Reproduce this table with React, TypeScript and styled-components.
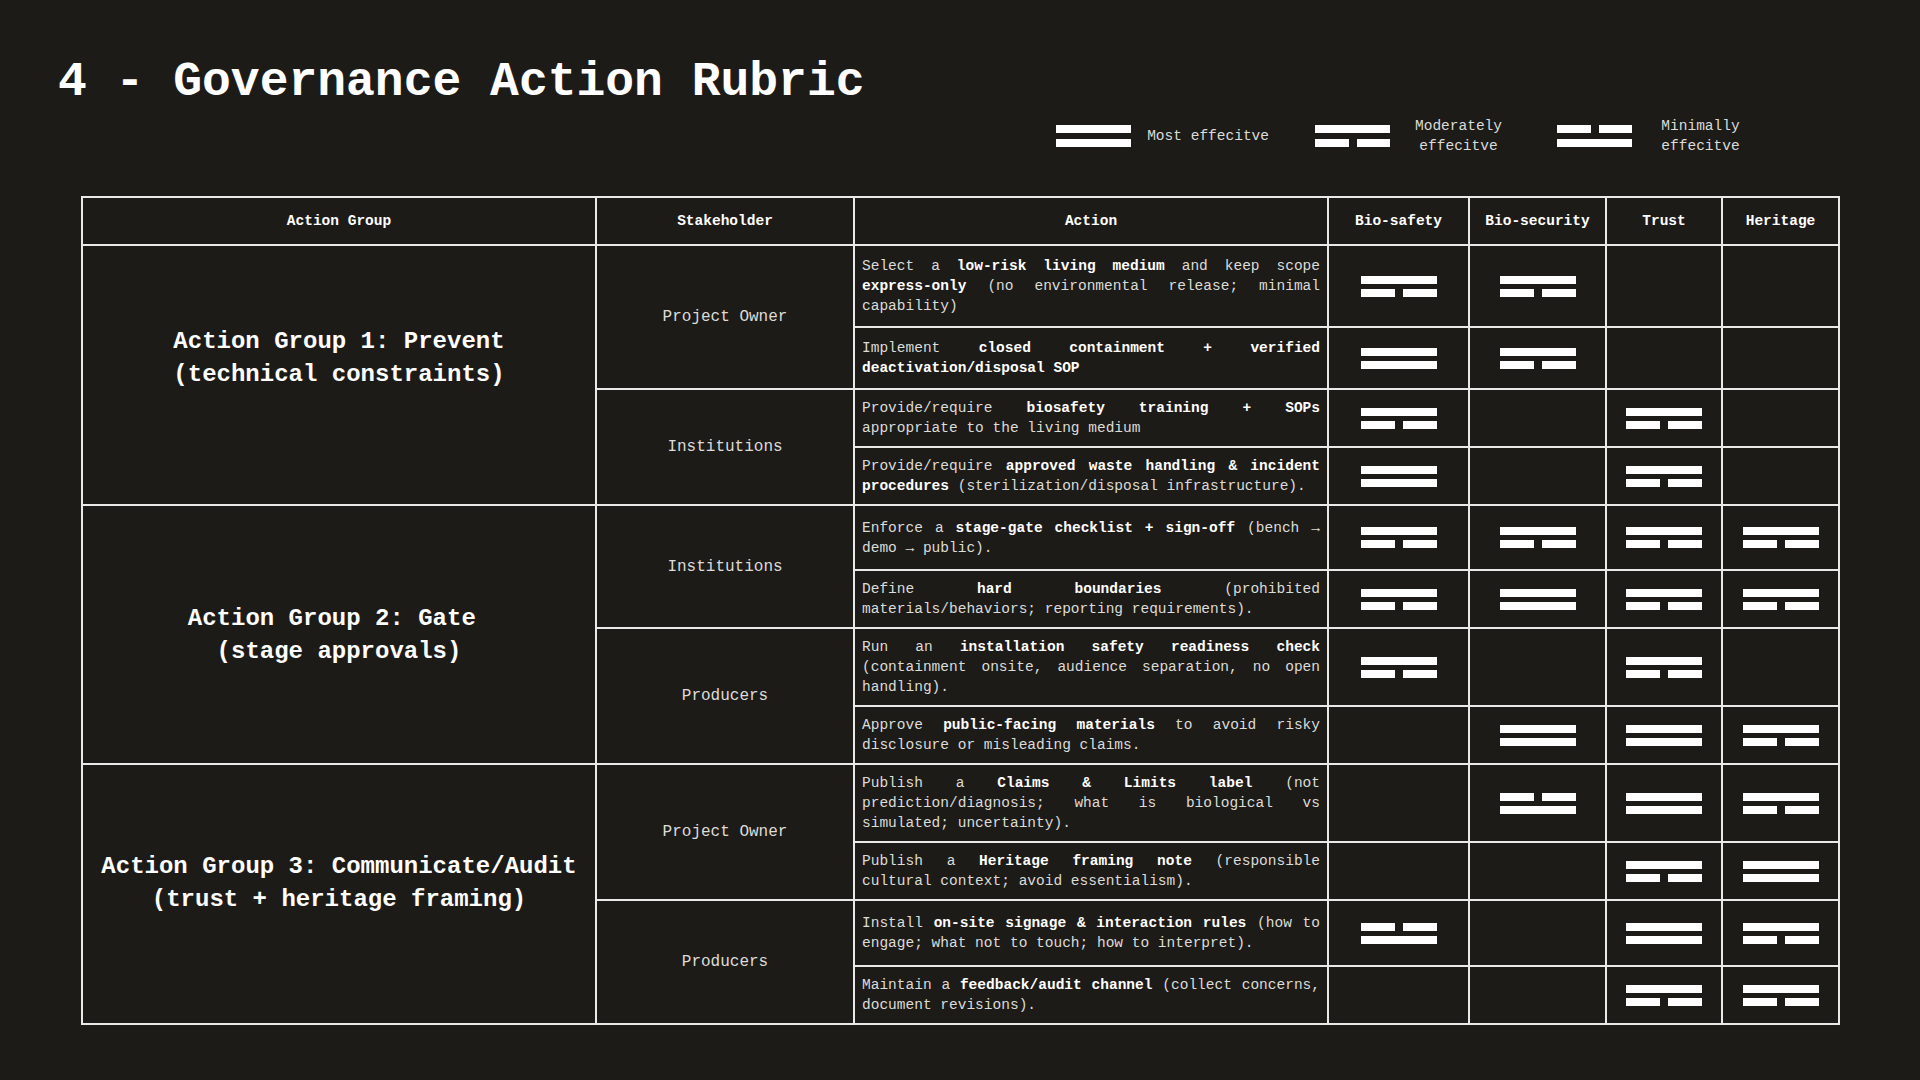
import React from 'react'
import styled, { createGlobalStyle } from 'styled-components'

type Level = 'most' | 'moderate' | 'minimal' | null

const GlobalStyle = createGlobalStyle`
  html, body {
    margin: 0;
    padding: 0;
    background: #1d1b18;
  }
  body {
    font-family: 'Liberation Mono', 'DejaVu Sans Mono', monospace;
    color: #dcdcd8;
  }
`

const Page = styled.div`
  width: 1920px;
  height: 1080px;
  box-sizing: border-box;
  padding-top: 58px;
  background: #1d1b18;
  display: flex;
  flex-direction: column;
  overflow: hidden;
`

const Title = styled.h1`
  margin: 0 0 0 58px;
  font-size: 48px;
  line-height: 48px;
  font-weight: 700;
  color: #ffffff;
`

const Legend = styled.div`
  display: flex;
  justify-content: flex-end;
  align-items: center;
  height: 40px;
  margin-top: 10px;
  padding-right: 167px;
  gap: 46px;
`

const LegendItem = styled.div`
  display: flex;
  align-items: center;
  gap: 16px;
`

const LegendLabel = styled.span<{ $width?: number }>`
  width: ${p => (p.$width ? `${p.$width}px` : 'auto')};
  font-size: 14.5px;
  line-height: 20px;
  text-align: center;
  color: #dcdcd8;
`

const Table = styled.div`
  margin: 40px 0 0 81px;
  width: max-content;
  display: grid;
  grid-template-columns: 512px 256px 472px 139px 135px 114px 115px;
  grid-template-rows: 46px 80px 60px 56px 56px 63px 56px 76px 56px 76px 56px 64px 56px;
  gap: 2px;
  padding: 2px;
  background: #e9e9e7;
  font-size: 14.5px;
`

const Cell = styled.div`
  background: #1d1b18;
  display: flex;
  align-items: center;
  justify-content: center;
`

const HeadCell = styled(Cell)`
  font-weight: 700;
  color: #ffffff;
`

const GroupCell = styled(Cell)<{ $span: number; $lift: number }>`
  grid-row: span ${p => p.$span};
  flex-direction: column;
  padding-bottom: ${p => p.$lift}px;
  font-size: 24px;
  line-height: 33px;
  font-weight: 700;
  color: #ffffff;
  white-space: pre;
`

const StakeCell = styled(Cell)<{ $span: number }>`
  grid-row: span ${p => p.$span};
  font-size: 16px;
  color: #dcdcd8;
`

const ActionCell = styled(Cell)`
  padding: 0 7px;
`

const ActionText = styled.p`
  margin: 0;
  width: 100%;
  line-height: 20px;
  text-align: justify;
  color: #dcdcd8;

  b {
    font-weight: 700;
    color: #ffffff;
  }
`

const Mark = styled.div<{ $width: number; $gap: number }>`
  width: ${p => p.$width}px;
  display: flex;
  flex-direction: column;
  gap: ${p => p.$gap}px;
`

const BarRow = styled.div`
  display: flex;
  gap: 8px;
  height: 8px;
`

const Bar = styled.span`
  flex: 1;
  background: #ffffff;
`

const Rating: React.FC<{ level: Level; width?: number; gap?: number }> = ({ level, width = 76, gap = 5 }) => {
  if (!level) return null
  const rows: number[] = level === 'most' ? [1, 1] : level === 'moderate' ? [1, 2] : [2, 1]
  return (
    <Mark $width={width} $gap={gap}>
      {rows.map((n, i) => (
        <BarRow key={i}>
          {Array.from({ length: n }).map((_, j) => (
            <Bar key={j} />
          ))}
        </BarRow>
      ))}
    </Mark>
  )
}

interface ActionRow {
  text: React.ReactNode
  ratings: Level[]
}

interface StakeBlock {
  name: string
  actions: ActionRow[]
}

interface Group {
  title: string
  subtitle: string
  lift: number
  stakeholders: StakeBlock[]
}

const groups: Group[] = [
  {
    title: 'Action Group 1: Prevent',
    subtitle: '(technical constraints)',
    lift: 34,
    stakeholders: [
      {
        name: 'Project Owner',
        actions: [
          {
            text: <>Select a <b>low-risk living medium</b> and keep scope <b>express-only</b> (no environmental release; minimal capability)</>,
            ratings: ['moderate', 'moderate', null, null],
          },
          {
            text: <>Implement <b>closed containment + verified deactivation/disposal SOP</b></>,
            ratings: ['most', 'moderate', null, null],
          },
        ],
      },
      {
        name: 'Institutions',
        actions: [
          {
            text: <>Provide/require <b>biosafety training + SOPs</b> appropriate to the living medium</>,
            ratings: ['moderate', null, 'moderate', null],
          },
          {
            text: <>Provide/require <b>approved waste handling &amp; incident procedures</b> (sterilization/disposal infrastructure).</>,
            ratings: ['most', null, 'moderate', null],
          },
        ],
      },
    ],
  },
  {
    title: 'Action Group 2: Gate ',
    subtitle: '(stage approvals)',
    lift: 0,
    stakeholders: [
      {
        name: 'Institutions',
        actions: [
          {
            text: <>Enforce a <b>stage-gate checklist + sign-off</b> (bench → demo → public).</>,
            ratings: ['moderate', 'moderate', 'moderate', 'moderate'],
          },
          {
            text: <>Define <b>hard boundaries</b> (prohibited materials/behaviors; reporting requirements).</>,
            ratings: ['moderate', 'most', 'moderate', 'moderate'],
          },
        ],
      },
      {
        name: 'Producers',
        actions: [
          {
            text: <>Run an <b>installation safety readiness check</b> (containment onsite, audience separation, no open handling).</>,
            ratings: ['moderate', null, 'moderate', null],
          },
          {
            text: <>Approve <b>public-facing materials</b> to avoid risky disclosure or misleading claims.</>,
            ratings: [null, 'most', 'most', 'moderate'],
          },
        ],
      },
    ],
  },
  {
    title: 'Action Group 3: Communicate/Audit',
    subtitle: '(trust + heritage framing)',
    lift: 23,
    stakeholders: [
      {
        name: 'Project Owner',
        actions: [
          {
            text: <>Publish a <b>Claims &amp; Limits label</b> (not prediction/diagnosis; what is biological vs simulated; uncertainty).</>,
            ratings: [null, 'minimal', 'most', 'moderate'],
          },
          {
            text: <>Publish a <b>Heritage framing note</b> (responsible cultural context; avoid essentialism).</>,
            ratings: [null, null, 'moderate', 'most'],
          },
        ],
      },
      {
        name: 'Producers',
        actions: [
          {
            text: <>Install <b>on-site signage &amp; interaction rules</b> (how to engage; what not to touch; how to interpret).</>,
            ratings: ['minimal', null, 'most', 'moderate'],
          },
          {
            text: <>Maintain a <b>feedback/audit channel</b> (collect concerns, document revisions).</>,
            ratings: [null, null, 'moderate', 'moderate'],
          },
        ],
      },
    ],
  },
]

const headers = ['Action Group', 'Stakeholder', 'Action', 'Bio-safety', 'Bio-security', 'Trust', 'Heritage']

export default function App() {
  return (
    <>
      <GlobalStyle />
      <Page>
        <Title>4 - Governance Action Rubric</Title>

        <Legend>
          <LegendItem>
            <Rating level="most" width={75} gap={6} />
            <LegendLabel>Most effecitve</LegendLabel>
          </LegendItem>
          <LegendItem>
            <Rating level="moderate" width={75} gap={6} />
            <LegendLabel $width={105}>Moderately effecitve</LegendLabel>
          </LegendItem>
          <LegendItem>
            <Rating level="minimal" width={75} gap={6} />
            <LegendLabel $width={105}>Minimally effecitve</LegendLabel>
          </LegendItem>
        </Legend>

        <Table>
          {headers.map(h => (
            <HeadCell key={h}>{h}</HeadCell>
          ))}
          {groups.map(g => {
            const rowCount = g.stakeholders.reduce((n, s) => n + s.actions.length, 0)
            return (
              <React.Fragment key={g.title}>
                <GroupCell $span={rowCount} $lift={g.lift}>
                  <span>{g.title}</span>
                  <span>{g.subtitle}</span>
                </GroupCell>
                {g.stakeholders.map((s, si) => (
                  <React.Fragment key={si}>
                    <StakeCell $span={s.actions.length}>{s.name}</StakeCell>
                    {s.actions.map((a, ai) => (
                      <React.Fragment key={ai}>
                        <ActionCell>
                          <ActionText>{a.text}</ActionText>
                        </ActionCell>
                        {a.ratings.map((r, ri) => (
                          <Cell key={ri}>
                            <Rating level={r} />
                          </Cell>
                        ))}
                      </React.Fragment>
                    ))}
                  </React.Fragment>
                ))}
              </React.Fragment>
            )
          })}
        </Table>
      </Page>
    </>
  )
}
